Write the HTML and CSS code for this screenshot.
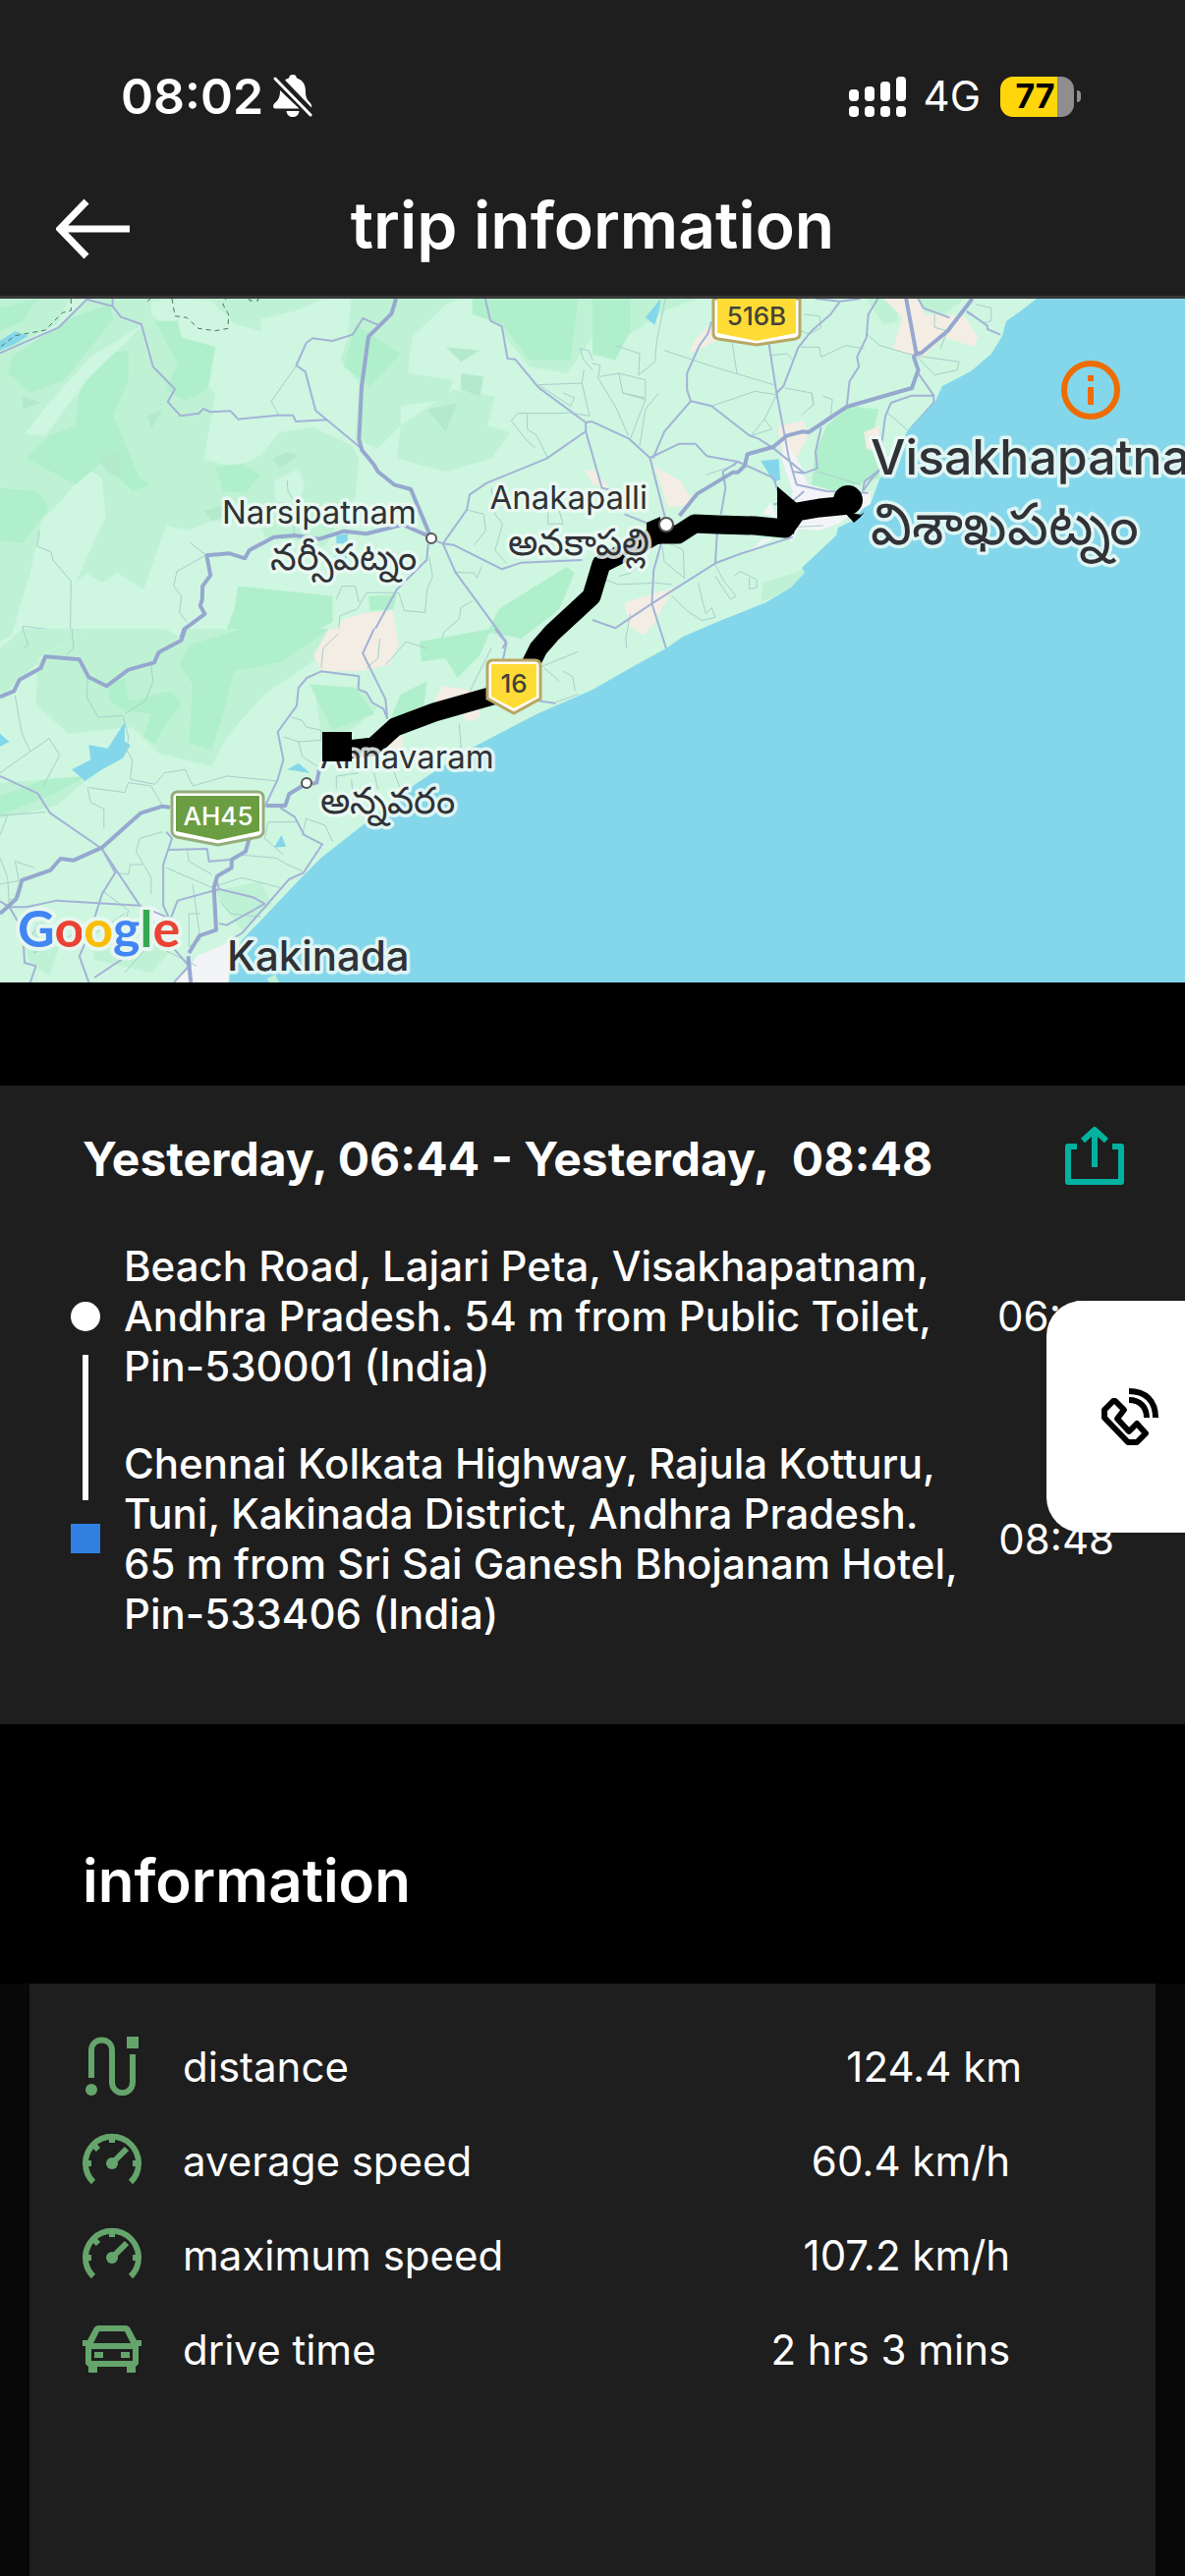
FILE: index.html
```
<!DOCTYPE html>
<html lang="en">
<head>
    <meta charset="UTF-8">
    <meta name="viewport" content="width=device-width, initial-scale=1.0">
    <title>trip information</title>
    <link rel="stylesheet" href="styles.css">
</head>
<body>
    <header class="top">
        <div class="status-bar">
            <div class="status-group">
                <span class="clock">08:02</span>
                <svg class="bell" viewBox="0 0 40 44" aria-label="Silent mode">
                    <path fill="#fff" d="M12 5.500C13.500 4.500 14.500 4 16 3.500C16.500 1 17.500 0 20 0C22.500 0 23.500 1 24 3.500C30.500 5.500 33 10.500 33 17C33 24 35 26 38 29C39 30.500 39.500 32 39 33.500ZM7 16L26.500 34.500H2C-.5 34.500 -.5 31 1.500 29C5 26 7 23.500 7 16ZM13.500 37H26.500C26 41 23.500 43 20 43C16.500 43 14 41 13.500 37Z"/>
                    <path stroke="#fff" stroke-width="3" stroke-linecap="round" d="M2 4L38 41"/>
                </svg>
            </div>
            <div class="status-group">
                <svg class="signal" viewBox="0 0 58 41" fill="#fff" aria-label="Signal">
                    <rect x="0" y="13" width="10" height="12" rx="4"/>
                    <rect x="16" y="10" width="10" height="15" rx="4"/>
                    <rect x="32" y="5" width="10" height="20" rx="4"/>
                    <rect x="48" y="0" width="10" height="25" rx="4"/>
                    <rect x="0" y="30" width="10" height="11" rx="4"/>
                    <rect x="16" y="30" width="10" height="11" rx="4"/>
                    <rect x="32" y="30" width="10" height="11" rx="4"/>
                    <rect x="48" y="30" width="10" height="11" rx="4"/>
                </svg>
                <span class="network">4G</span>
                <div class="battery"><span class="battery-level">77</span></div>
            </div>
        </div>
        <div class="title-bar">
            <button class="icon-button" aria-label="Back">
                <svg class="back-icon" viewBox="0 0 76 70" fill="none" stroke="#fff" stroke-width="7">
                    <path d="M31 11L4 39L31 67M4 39H75"/>
                </svg>
            </button>
            <h1>trip information</h1>
        </div>
    </header>

    <section class="map">
        <svg class="map-canvas" viewBox="0 0 1206 696" aria-label="Trip route">
            <rect class="land" width="1206" height="696"/>

            <!-- north west -->
            <g transform="translate(0 -4) scale(.3846 .3333)">
                <path class="hill" d="M0 0H190L150 90L0 180ZM230 20L300 0H880L780 50L690 75L690 110L620 90L560 20L500 10L400 20L400 60L500 160L460 180L570 300L560 370L540 500L620 530L690 490L740 420L830 405L930 460L950 500L940 620L900 680L860 770L780 750L700 740L690 700L560 690L500 720L440 705L380 900L310 850L270 880L230 850L200 880L250 750L280 680L270 560L230 530L170 620L110 690L80 850L30 1040L0 1060V180L150 110Z"/>
                <path class="hill" d="M930 0H1240L1180 30L1090 130L1080 240L1200 260L1180 320L1060 340L1060 400L1000 470L940 440L950 270L900 200L920 130ZM1290 0H1568V130L1500 240L1400 220L1330 120ZM1060 400L1200 290L1310 310L1290 400L1350 420L1300 500L1180 540L1050 500Z"/>
                <path class="forest" d="M30 190L190 70L290 30L300 75L170 260L80 300L20 240ZM270 180L340 170L340 260L300 370L370 560L400 580L350 600L270 510L200 580L70 500L130 430L200 400L210 300ZM410 80L470 80L480 130L570 160L550 290L490 325L440 290L470 210ZM1250 12H1530L1510 200L1400 200L1330 90L1250 60ZM570 525L640 515L690 550L650 605L590 600ZM0 590L100 600L130 650L60 760L0 750ZM630 890L880 920L880 1000L740 1080H580L620 960ZM940 90L1060 180L980 280L910 220ZM0 40L100 12L60 80L0 110ZM1320 960L1500 830L1520 850L1480 960L1380 1050L1290 1030ZM975 920L1050 915L1040 960L980 965Z"/>
                <path class="land" d="M380 90L230 260L120 430L65 425L130 330L240 190ZM690 75L780 50L850 80L860 150L790 190L700 130ZM790 530L805 580L790 640L730 630L725 570Z"/>
                <path class="shade" d="M1130 350L1210 330L1180 420ZM1220 240L1280 250L1270 310L1220 290ZM720 500L760 480L790 490L740 530ZM260 500L310 480L330 560L290 550ZM60 310L110 330L60 350ZM390 370L430 350L400 410ZM1180 160L1270 170L1220 205ZM540 660L600 640L640 660L560 690Z"/>
                <path class="town" d="M840 1080L910 990L970 970L1040 965L1055 1080ZM1545 530L1568 540V580Z"/>
                <path class="water" d="M0 140L40 112L75 125L40 150L0 170ZM890 735L920 730L920 760L890 760ZM885 790L920 790L915 820L890 835Z"/>
                <path class="lane" d="M785 215L718 325L738 368M105 720L98 768L135 785L140 810L188 875L186 1030L60 1012L70 1080M503 757L545 795L468 845L460 890L480 920L475 970L495 1000M760 568L762 600L778 630V730M1135 800L1145 860L1130 900L1125 970L1070 965L1055 910L970 910L945 960L900 980L895 1030L870 1035L860 1080M890 930L905 890L940 890L950 940M1300 590L1310 670L1330 700L1310 780L1340 820M1235 657L1280 670L1285 720L1255 765M1205 847L1255 850L1262 865L1275 830M1250 935L1220 955L1215 990L1175 1030L1170 1050M1568 230L1545 200L1535 165L1558 170L1568 200M1425 275L1540 270L1560 370L1505 360L1480 362L1370 362L1353 385L1390 440L1418 470M1540 270L1545 230M1425 275L1510 340L1520 315L1490 300M1450 500L1420 430L1395 410L1395 365M1450 620L1450 700L1490 700L1480 660"/>
                <path class="road" d="M0 178L155 100L230 14L298 35L320 68L374 90L405 220L463 288L444 327L478 370L527 362L538 348L557 358L610 355L630 380L735 368L775 368L783 387L865 382M298 35V12M955 468L835 353L808 235L784 216L810 148L827 133L880 141L933 122L960 72L1000 92M1284 12L1298 80L1328 97L1343 195L1363 197L1425 283L1550 390L1568 387M1550 390L1550 417L1447 500L1288 575L1243 610L1235 657L1172 760L1200 764L1328 838L1380 818L1540 810M1140 745L1172 760L1205 847L1340 1060L1330 1080M1133 760L1129 810L1050 900L965 1080M1550 417L1568 490"/>
                <path class="highway" d="M1048 12L1036 58L975 128L957 280L950 443L958 475L990 520L1000 540L1043 580L1087 594L1140 740L1065 702L970 730L910 722L845 746L780 735L725 740L660 780L648 805L608 790L547 796L557 857L536 890L535 930L530 950L542 975L487 1022L478 1052L440 1080"/>
                <path class="boundary" d="M188 12V48L165 55L120 108L40 125L0 160M455 12L463 65L495 70L525 103L570 110L603 103L605 60L590 30L598 12M660 12V18H683V12M398 12L390 20"/>
            </g>

            <!-- north east -->
            <g transform="translate(603 -4) scale(.3846 .3333)">
                <path class="hill" d="M0 0H310L200 45L60 150L0 190ZM720 0H800L810 80L770 90L740 40ZM860 0H1000L930 60L870 50ZM450 880L560 840L565 850L520 900L445 940Z"/>
                <path class="forest" d="M0 0H100V110L60 200L0 180ZM620 400L680 340L757 350L745 410L760 560L640 600L580 580L590 480Z"/>
                <path class="town" d="M760 0L860 0L880 60L985 65L1020 130L1010 160L930 130L870 195L795 165L820 70ZM310 90L330 140L255 180L270 140ZM490 400L560 385L570 430L540 500L520 530L500 470ZM718 420L760 400L755 480L725 470ZM165 525L235 570L270 640L200 650ZM85 940L215 895L160 1010L135 1040L95 1010ZM0 530L45 590L0 580ZM550 680L620 675L600 710L545 705Z"/>
                <path class="city" d="M510 445L550 520L570 580L640 600L735 600L735 640L700 660L650 700L600 720L545 715L525 760L520 700L530 600L500 500ZM450 670L470 635L490 680ZM395 790L430 770L450 745L480 745L400 790Z"/>
                <path class="water" d="M140 70L180 12L178 40L165 92ZM445 507L493 502L497 565L480 572Z"/>
                <path class="lane" d="M60 155L125 180L122 245L165 205L170 140L195 0M0 210L20 215L15 255L60 340L95 430M20 250L70 240L140 260L140 315L80 300L70 240M80 300L140 320L100 440M125 460L140 350L175 300M190 170L320 220L480 275M315 340L430 295L485 305M370 148L382 240M475 185L515 180L530 200M550 160L600 160L605 190L670 155L720 165M560 60L600 65L605 100L575 120L550 110M510 285L580 300L585 340M555 365L585 335L580 300M610 310L635 320L630 370M725 120L760 155L850 185L970 205L965 230L905 245L860 190M905 60L905 100L940 110L920 165M1015 30L1055 40L1055 80L1035 85L990 55M780 360L835 415M595 540L710 580M455 380L475 410L420 430L455 380L490 300M300 550L380 520M185 770L190 815L243 865L240 780L205 760M20 865L70 885L165 880L210 885M70 860L100 850L120 830M210 920L250 965L290 995L325 985L315 955L300 975L290 930L280 880M325 860L365 930L380 920L345 870L325 825M375 860L390 845L435 870L435 895L415 898L415 865M100 975L88 1050L90 1080M415 700L450 720L530 710L610 705"/>
                <path class="road" d="M0 388L97 440L152 498L192 680M0 490L25 590L60 600M152 498L230 455L272 455L303 493L385 510M315 82L305 120L283 155L250 240L250 290L260 325L190 418L160 500M260 325L315 340L415 430L440 440L480 470L560 545M467 150L487 300L520 500L540 580L620 600L730 605M487 300L505 280L545 160L580 110L630 60L655 20L710 12M655 20L590 12M755 12L730 60L725 130L700 190L705 220L680 265L673 340M862 12L875 40L945 70M990 50L1045 95L1045 105L1080 122M862 240L903 308L845 308L790 330L775 370L760 500L765 530L720 570L715 600M903 308L903 330L840 410M605 405L590 480L595 530L560 545L530 540M560 600L530 630L480 640M352 590L345 540L385 510L480 560L490 600M352 590L340 670M330 720L325 820L395 790L530 740M325 820L157 943L60 1018L0 993M182 760L162 840L157 943L195 1080M85 670L150 700M715 600L740 560L765 530"/>
                <path class="highway" d="M1005 12L940 110L870 178L857 180L850 190L862 230L845 285L673 342L572 420L555 418L515 430L478 465L410 487L403 522L385 542L372 542L277 608L230 675M830 12L857 180"/>
            </g>

            <!-- south west -->
            <g transform="translate(0 336) scale(.3846 .3333)">
                <path class="hill" d="M500 0H900L840 90L700 200L600 330L560 420L420 380L350 300L180 320L95 230L100 90L240 0H440L480 30ZM830 170L950 180L1000 240L930 310L850 320ZM0 470L240 450L150 540L0 580ZM240 0L60 0L0 60V210L120 80ZM570 800L690 770L720 840L640 920L600 860ZM60 960L120 880L160 960L130 1060L80 1020ZM240 940L470 960L400 1050L250 1010Z"/>
                <path class="forest" d="M500 50L640 0H870L750 100L620 130L590 260L560 370L500 350L510 170L475 110ZM1060 200L1130 160L1120 250L1035 270ZM820 170L940 180L990 260L880 310ZM290 170L330 150L340 220L450 190L480 230L440 290L410 350L380 330L400 260L330 250L290 220ZM0 510L120 460L230 450L150 500L0 570ZM1110 40L1300 0L1270 80L1210 150L1180 90L1115 100Z"/>
                <path class="town" d="M870 0H1040L1055 50L1030 110L950 130L850 130L830 80ZM1170 175L1260 190L1270 270L1240 285L1190 230L1140 240ZM950 340L1070 330L1060 370L960 380Z"/>
                <path class="city" d="M370 850L410 850L450 900L480 960L440 920ZM520 1000L600 960L605 1080H455L500 1040Z"/>
                <path class="water" d="M190 430L240 400L235 355L285 365L330 285L330 345L345 355L325 395L270 430L225 465ZM760 430L790 410L820 440ZM0 320L25 345L0 360ZM725 668L745 630L757 665Z"/>
                <path class="lane" d="M60 0L75 50L60 60M190 0L195 60L175 80M40 205L58 320L80 375L0 440M80 375L130 335L158 385L115 480M232 150L230 210L260 270L325 265L340 330L335 370L350 400L345 460L410 475L435 440L490 430L510 480L600 450L735 465M400 110L405 160L385 220L330 260M232 485L240 530L275 550L275 610M235 485L330 500L340 470L400 480L430 540M0 570L120 560M0 630L20 570M360 680L370 640L430 620M360 680L400 760L400 810M305 745L340 750L345 720L375 720M270 800L340 860L330 900M495 670L500 710L560 750M440 730L560 790L640 760L740 790M510 780L530 950L500 970V870H530M630 690L730 700L760 720L800 740M750 690L700 640L710 590L790 590M800 630L810 580L860 600L880 650M770 270L800 280L810 300L850 310L850 340L790 345L800 390L840 420M750 330L790 345M890 490L890 450L950 440M930 460L935 530L960 560M990 440L1000 490M1040 430L1060 490M1215 290L1220 360L1180 390M1240 200L1265 140L1300 60M1380 140L1530 70M1440 120L1480 160M1490 130L1515 145L1522 190M1470 225L1530 200M850 120L855 60L895 15M1005 30L1000 90L970 120M1020 110L1075 40L1130 60M0 700L20 760L25 850M0 780L50 770L40 710L90 730M20 830L50 820L60 780M80 950L100 900L90 990L150 960L200 930M240 940L330 870M330 1050L400 960L520 1030M580 830L610 870L690 880"/>
                <path class="road" d="M0 450L100 503L132 562L270 672L370 845M270 672L305 745L270 810L240 920L210 1000L235 1080M0 832L25 850L70 850L150 830L370 845L440 880L465 890L400 950L250 1065M25 850L60 920L65 1020L95 1030L80 1080M440 620L455 640L432 720V845L450 890L470 830L580 795L670 820L700 840L600 905L580 900M445 675L548 672L553 710L610 705M370 845L440 950L500 1030L460 1080M700 545L735 460L750 400L735 315L785 235L790 180L812 150L850 130L950 145L948 185L970 195L985 225L1015 245L1025 275M740 545L780 575L805 630L853 658L803 745L765 765L640 930L610 950M1025 275L1020 215L960 75L990 0M1310 0L1340 45L1330 100M1425 220L1470 228M580 795L570 760"/>
                <path class="highway" d="M490 0L480 35L420 72L408 103L340 125L282 175L235 148L210 94L120 85L108 120L52 155L37 190L0 208M845 430L838 470L800 480L765 505L755 540L705 540M450 545L430 542L372 563L270 668L195 707L160 702L133 738L58 768L43 825L0 870M660 640L650 680L613 705V730L575 755L566 790L572 920L528 937L500 990M498 1000L505 1080"/>
            </g>

            <path class="sea" d="M1055 0L1038 13L1024 23L1020 38L1009 56L988 74L959 89L951 106L924 134L910 160L895 184L886 209L878 214L868 226L853 233L851 241L816 274L819 279L805 294L780 309L730 329L695 344L678 356L645 374L603 398L546 423L473 461L423 494L369 536L327 569L308 588L269 629L246 653L235 673L233 696H1206V0Z"/>
            <path class="hill" d="M272 692L280 688L284 696H274Z"/>

            <!-- driven route -->
            <polyline class="route" points="865,210 834,213 811,217 799,234 768,231 730,230 707,229 690,240 668,240 640,256 612,270 602,303 588,316 562,340 548,356 538,376 516,400 442,421 402,436 380,456 345,460"/>
            <path d="M791 191L812 209L808 240L791 226ZM876 220L880 217L875 223L869 228L858 216ZM658 228L672 222L672 250L658 246Z"/>
            <circle cx="863" cy="205" r="15"/>

            <g class="place-dot">
                <circle cx="439" cy="244" r="5"/>
                <circle cx="678" cy="230" r="7"/>
                <circle cx="312" cy="493" r="5"/>
            </g>

            <path class="shield-rim" d="M726 0H814V36Q814 40 809 41L770 47L731 41Q726 40 726 36Z"/>
            <path class="shield-yellow" d="M730 0H810V35L770 43L730 35Z"/>
            <path class="shield-rim" d="M502 368H544Q550 368 550 374V407L523 422L496 407V374Q496 368 502 368Z"/>
            <path class="shield-yellow" d="M500 372H546V405L523 417L500 405Z"/>
            <path class="shield-rim green" d="M181 502H262Q268 502 268 508V542Q268 546 263 548L222 556L180 548Q175 546 175 542V508Q175 502 181 502Z"/>
            <path class="shield-green" d="M179 506H264V542L222 551L179 542Z"/>
            <g class="shield-text">
                <text x="770" y="27">516B</text>
                <text x="523" y="401">16</text>
                <text class="light" x="222" y="536">AH45</text>
            </g>

            <g class="place">
                <text class="end" x="424" y="229">Narsipatnam</text>
                <text class="end telugu" x="424" y="276">నర్సీపట్నం</text>
                <text class="end" x="659" y="214">Anakapalli</text>
                <text class="end telugu" x="661" y="261">అనకాపల్లి</text>
                <text x="326" y="478">Annavaram</text>
                <text class="telugu" x="326" y="524">అన్నవరం</text>
            </g>
            <rect x="328" y="441" width="30" height="30"/>
            <g class="place city-name">
                <text class="large" x="886" y="179">Visakhapatnam</text>
                <text class="large-telugu" x="886" y="250">విశాఖపట్నం</text>
                <text x="231" y="684">Kakinada</text>
            </g>
            <text class="google" x="18" y="660"><tspan fill="#4285f4">G</tspan><tspan fill="#ea4335">o</tspan><tspan fill="#fbbc05">o</tspan><tspan fill="#4285f4">g</tspan><tspan fill="#34a853">l</tspan><tspan fill="#ea4335">e</tspan></text>
        </svg>
        <button class="icon-button map-info" aria-label="Map information">
            <svg class="action-icon" viewBox="0 0 60 60">
                <circle cx="30" cy="30" r="27" fill="none" stroke="#ef6c00" stroke-width="6"/>
                <path fill="#ef6c00" d="M27 15H33V21H27ZM27 27H33V45H27Z"/>
            </svg>
        </button>
    </section>

    <section class="trip">
        <div class="trip-head">
            <h2>Yesterday, 06:44 - Yesterday,&nbsp; 08:48</h2>
            <button class="icon-button" aria-label="Share trip">
                <svg class="action-icon" viewBox="0 0 60 60" fill="none" stroke="#03b1a0" stroke-width="6" stroke-linejoin="round">
                    <path d="M12 21H3V57H57V21H48"/>
                    <path d="M30 42V5M18 15L30 4L42 15"/>
                </svg>
            </button>
        </div>
        <div class="stops">
            <div class="stop-track">
                <span class="dot"></span>
                <span class="line"></span>
                <span class="square"></span>
            </div>
            <div class="stop-list">
                <div class="stop">
                    <p>Beach Road, Lajari Peta, Visakhapatnam,<br>Andhra Pradesh. 54 m from Public Toilet,<br>Pin-530001 (India)</p>
                    <time>06:44</time>
                </div>
                <div class="stop">
                    <p>Chennai Kolkata Highway, Rajula Kotturu,<br>Tuni, Kakinada District, Andhra Pradesh.<br>65 m from Sri Sai Ganesh Bhojanam Hotel,<br>Pin-533406 (India)</p>
                    <time>08:48</time>
                </div>
            </div>
        </div>
        <button class="call-button" aria-label="Call">
            <svg class="call-icon" viewBox="0 0 60 60" fill="none" stroke="#000" stroke-width="6" stroke-linejoin="round">
                <path d="M13 14L4 23V31L28 56H37L46 47L37 37L29 45L17 32L24 23L15 14Z"/>
                <path d="M29 13C40 13 47 20 47 31M29 4C46 4 56 14 56 31"/>
            </svg>
        </button>
    </section>

    <h2 class="section-title">information</h2>

    <section class="info">
        <table>
            <tr>
                <td class="info-icon">
                    <svg class="action-icon" viewBox="0 0 60 60" fill="none" stroke="#65a56c" stroke-width="6">
                        <path d="M9 42V14C9 0 30 0 30 14V46C30 61 51 61 51 46V18"/>
                        <circle cx="9" cy="54" r="6" fill="#65a56c" stroke="none"/>
                        <rect x="45" y="0" width="12" height="12" fill="#65a56c" stroke="none"/>
                    </svg>
                </td>
                <th scope="row">distance</th>
                <td class="value">124.4 km</td>
            </tr>
            <tr>
                <td class="info-icon">
                    <svg class="action-icon" viewBox="0 0 60 60" fill="none" stroke="#65a56c" stroke-width="6">
                        <path d="M11 52A27 27 0 1 1 49 52"/>
                        <path d="M30 5V12M5 33H9M51 33H55M11 14L16 19M31 32L45 18"/>
                        <circle cx="30" cy="33" r="6" fill="#65a56c" stroke="none"/>
                    </svg>
                </td>
                <th scope="row">average speed</th>
                <td class="value">60.4 km/h </td>
            </tr>
            <tr>
                <td class="info-icon">
                    <svg class="action-icon" viewBox="0 0 60 60" fill="none" stroke="#65a56c" stroke-width="6">
                        <path d="M11 52A27 27 0 1 1 49 52"/>
                        <path d="M30 5V12M5 33H9M51 33H55M11 14L16 19M31 32L45 18"/>
                        <circle cx="30" cy="33" r="6" fill="#65a56c" stroke="none"/>
                    </svg>
                </td>
                <th scope="row">maximum speed</th>
                <td class="value">107.2 km/h </td>
            </tr>
            <tr>
                <td class="info-icon">
                    <svg class="action-icon" viewBox="0 0 60 60" fill="#65a56c">
                        <path fill-rule="evenodd" d="M15 6H45L48 8L55 21H60V27H57V45L54 48V54H45V48H15V54H6V48L3 45V27H0V21H5L12 8ZM17 12L11 24H49L43 12ZM9 30V42H51V30Z"/>
                        <path d="M12 33H21V39H12ZM39 33H48V39H39Z"/>
                    </svg>
                </td>
                <th scope="row">drive time</th>
                <td class="value">2 hrs 3 mins </td>
            </tr>
        </table>
    </section>
</body>
</html>
```
FILE: styles.css
```
* {
    box-sizing: border-box;
}
body {
    margin: 0;
    min-height: 100vh;
    display: flex;
    flex-direction: column;
    background: #000;
    color: #fff;
    font-family: Inter, "Noto Sans", sans-serif;
    font-size: 42px;
}
h1, h2, p {
    margin: 0;
}
svg {
    display: block;
}
.icon-button {
    display: block;
    padding: 0;
    border: none;
    background: none;
    cursor: pointer;
}
.action-icon {
    width: 60px;
    height: 60px;
}

/* header */
.top {
    background: #1e1e1e;
    border-bottom: 3px solid #383838;
}
.status-bar {
    display: flex;
    justify-content: space-between;
    align-items: center;
    padding: 68px 113px 0 123px;
    line-height: 60px;
}
.status-group {
    display: flex;
    align-items: center;
}
.clock {
    font-size: 50px;
    font-weight: 600;
}
.bell {
    width: 40px;
    height: 44px;
    margin-left: 10px;
}
.signal {
    width: 58px;
    height: 41px;
}
.network {
    margin: 0 20px 0 18px;
}
.battery {
    position: relative;
    display: flex;
    align-items: center;
    justify-content: center;
    width: 75px;
    height: 41px;
    padding-right: 4px;
    border-radius: 13px;
    background: linear-gradient(to right, #ffd60a 78%, #8e8e8e 78%);
}
.battery::after {
    content: "";
    position: absolute;
    right: -7px;
    width: 4px;
    height: 12px;
    border-radius: 0 4px 4px 0;
    background: #8e8e8e;
}
.battery-level {
    color: #000;
    font-size: 34px;
    font-weight: 700;
}
.title-bar {
    display: grid;
    grid-template-columns: 76px 1fr 76px;
    align-items: center;
    padding: 52px 57px 23px;
}
.title-bar h1 {
    font-size: 66px;
    font-weight: 600;
    line-height: 98px;
    text-align: center;
}
.back-icon {
    width: 76px;
    height: 70px;
}

/* map */
.map {
    position: relative;
    overflow: hidden;
}
.map-canvas {
    width: 100%;
    height: auto;
}
.map-info {
    position: absolute;
    top: 63px;
    right: 66px;
}
.land {
    fill: #cef6e1;
}
.hill {
    fill: #bff2d5;
}
.forest {
    fill: #b0efcb;
}
.shade {
    fill: #b4eacc;
}
.town {
    fill: #f3ede3;
}
.city {
    fill: #f3f4f7;
}
.water, .sea {
    fill: #84d7ea;
}
.lane, .road, .highway, .boundary {
    fill: none;
    stroke-linejoin: round;
    vector-effect: non-scaling-stroke;
}
.lane {
    stroke: #a9cfca;
    stroke-width: 1px;
}
.road {
    stroke: #a3b3d6;
    stroke-width: 2px;
}
.highway {
    stroke: #96a8cf;
    stroke-width: 4px;
}
.boundary {
    stroke: #4f7564;
    stroke-width: 1px;
    stroke-dasharray: 5 4;
}
.route {
    fill: none;
    stroke: #000;
    stroke-width: 19px;
    stroke-linejoin: round;
}
.place-dot {
    fill: #fff;
    stroke: #55555a;
    stroke-width: 2px;
}
.shield-rim {
    fill: #fff;
    stroke: #b9a763;
    stroke-width: 3px;
}
.shield-rim.green {
    stroke: #96ad7c;
}
.shield-yellow {
    fill: #ffdc35;
}
.shield-green {
    fill: #6b9e42;
}
.shield-text {
    font-size: 26px;
    font-weight: 500;
    text-anchor: middle;
    fill: #44423a;
}
.shield-text .light {
    fill: #fff;
}
.place {
    font-size: 33px;
    fill: #303236;
    stroke: #effaf6;
    stroke-opacity: .85;
    stroke-width: 7px;
    stroke-linejoin: round;
    paint-order: stroke;
}
.telugu {
    font-size: 38px;
}
.end {
    text-anchor: end;
}
.city-name {
    font-size: 42px;
    font-weight: 500;
}
.large {
    font-size: 50px;
}
.large-telugu {
    font-size: 59px;
}
.google {
    font-family: Lato, sans-serif;
    font-size: 52px;
    font-weight: 700;
    stroke: #e6f7ef;
    stroke-width: 8px;
    stroke-linejoin: round;
    paint-order: stroke;
}

/* trip card */
.trip {
    position: relative;
    margin-top: 105px;
    padding: 41px 62px 87px 72px;
    background: #1e1e1e;
}
.trip-head {
    display: flex;
    justify-content: space-between;
    align-items: flex-start;
    padding-left: 12px;
}
.trip-head h2 {
    font-size: 48px;
    font-weight: 700;
    line-height: 68px;
}
.stops {
    display: flex;
    gap: 24px;
    margin-top: 49px;
}
.stop-track {
    display: flex;
    flex-direction: column;
    align-items: center;
    gap: 24px;
    width: 30px;
    padding: 62px 0 87px;
}
.dot {
    width: 30px;
    height: 30px;
    border-radius: 50%;
    background: #fff;
}
.line {
    flex: 1;
    width: 6px;
    background: #fff;
}
.square {
    width: 30px;
    height: 30px;
    background: #2f80e1;
}
.stop-list {
    flex: 1;
    display: flex;
    flex-direction: column;
    gap: 48px;
}
.stop {
    display: flex;
    justify-content: space-between;
    align-items: center;
    padding-right: 10px;
    line-height: 51px;
}
.stop p {
    font-weight: 500;
}
.call-button {
    position: absolute;
    top: 219px;
    right: 0;
    display: flex;
    align-items: center;
    width: 141px;
    height: 236px;
    padding: 0 0 0 55px;
    border: none;
    border-radius: 36px 0 0 36px;
    background: #fff;
    cursor: pointer;
}
.call-icon {
    width: 60px;
    height: 60px;
}

/* information */
.section-title {
    padding: 109px 84px 55px;
    font-size: 60px;
    font-weight: 600;
    line-height: 100px;
}
.info {
    flex: 1;
    padding: 36px 136px 0 54px;
    background: #1e1e1e;
    border: solid #080808;
    border-width: 0 30px;
}
.info table {
    width: 100%;
    border-collapse: collapse;
}
.info td, .info th {
    height: 96px;
    padding: 0;
    font-weight: 400;
    text-align: left;
}
.info .info-icon {
    width: 102px;
}
.info .value {
    text-align: right;
    white-space: pre;
}
```
